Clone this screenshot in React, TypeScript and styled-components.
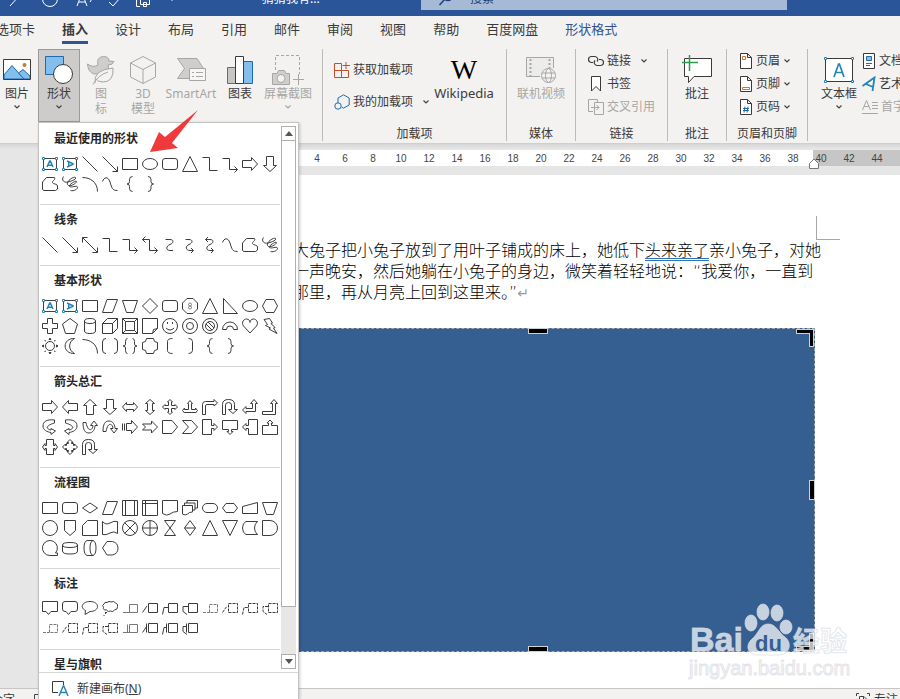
import React from 'react';
import styled, { createGlobalStyle, css } from 'styled-components';

const GlobalStyle = createGlobalStyle`
  * { box-sizing: border-box; }
  body { margin: 0; }
  button, input {
    font: inherit;
    color: inherit;
    background: none;
    border: 0;
    padding: 0;
    margin: 0;
  }
`;

const ui = '"Noto Sans", "Noto Sans CJK SC", sans-serif';
const ink = '#3b3a39';
const faded = '#a8a6a4';

const Window = styled.div`
  display: flex;
  flex-direction: column;
  height: 100vh;
  overflow: hidden;
  background: #e6e6e6;
  color: ${ink};
  font: 12px/15px ${ui};
`;

/* ---------- title bar ---------- */

const TitleBar = styled.header`
  display: flex;
  align-items: flex-end;
  flex: none;
  height: 16px;
  overflow: hidden;
  background: #2a5699;
  color: #fff;
`;

const TitleRow = styled.div`
  display: flex;
  align-items: center;
  flex: 1;
  height: 36px;
`;

const QuickTools = styled.div`
  display: flex;
  gap: 9px;
  padding-left: 5px;
  width: 262px;
`;

const QuickButton = styled.button<{ $wide?: boolean }>`
  display: grid;
  place-items: center;
  width: ${(p) => (p.$wide ? 32 : 20)}px;
  height: 24px;
  svg { stroke: #fff; }
`;

const DocTitle = styled.div`
  width: 159px;
`;

const SearchBox = styled.label`
  display: flex;
  align-items: center;
  flex: 0 1 366px;
  height: 24px;
  gap: 16px;
  padding-left: 17px;
  background: #a6bad5;
  color: #1f3f77;
  svg { stroke: #1f3f77; }
  input { flex: 1; min-width: 0; }
  input::placeholder { color: #1f3f77; opacity: 1; }
`;

/* ---------- tabs ---------- */

const Tabs = styled.nav`
  display: flex;
  flex: none;
  gap: 27px;
  height: 29px;
  margin-left: -4px;
  background: #f3f2f1;
  box-shadow: -4px 0 #f3f2f1;
  font-size: 13px;
`;

const Tab = styled.button<{ $active?: boolean; $context?: boolean }>`
  height: 28px;
  padding-top: 2px;
  white-space: nowrap;
  border-bottom: 3px solid ${(p) => (p.$active ? '#2f5591' : 'transparent')};
  font-weight: ${(p) => (p.$active ? 700 : 400)};
  color: ${(p) => (p.$context ? '#2f5591' : ink)};
`;

/* ---------- ribbon ---------- */

const Ribbon = styled.section`
  display: flex;
  flex: none;
  height: 99px;
  padding-top: 4px;
  background: #f3f2f1;
  border-bottom: 1px solid #d0cfce;
`;

const Group = styled.div<{ $pad?: number; $last?: boolean }>`
  position: relative;
  display: flex;
  flex: none;
  flex-direction: column;
  justify-content: space-between;
  height: 92px;
  padding: 0 ${(p) => p.$pad ?? 8}px;
  border-right: ${(p) => (p.$last ? 0 : 1)}px solid #bdbbb9;
`;

const GroupBody = styled.div`
  display: flex;
`;

const GroupLabel = styled.div`
  text-align: center;
  white-space: nowrap;
`;

const BigButton = styled.button<{ $width: number; $disabled?: boolean; $pressed?: boolean }>`
  display: flex;
  flex-direction: column;
  align-items: center;
  width: ${(p) => p.$width}px;
  height: 73px;
  padding-top: 4px;
  white-space: nowrap;
  color: ${(p) => (p.$disabled ? faded : ink)};
  ${(p) =>
    p.$pressed &&
    css`
      background: #cdcccb;
      box-shadow: inset 0 0 0 1px #9b9a99;
    `}
`;

const IconBox = styled.span`
  display: grid;
  place-items: center;
  height: 33px;
`;

const WikiMark = styled.span`
  font: 28px/32px "Liberation Serif", serif;
  color: #000;
`;

const WikiLabel = styled.span`
  font-size: 13px;
`;

const SmallColumn = styled.div<{ $loose?: boolean }>`
  display: flex;
  flex-direction: column;
  gap: ${(p) => (p.$loose ? 9 : 0)}px;
  padding: ${(p) => (p.$loose ? '9px 0 0 3px' : 0)};
`;

const SmallButton = styled.button<{ $disabled?: boolean }>`
  display: flex;
  align-items: center;
  gap: 3px;
  height: 23px;
  white-space: nowrap;
  color: ${(p) => (p.$disabled ? faded : ink)};
`;

const ChevronSlot = styled.span<{ $gap?: number }>`
  display: grid;
  place-items: center;
  width: 8px;
  height: 12px;
  margin-left: ${(p) => p.$gap ?? 0}px;
`;

const MenuAnchor = styled.div`
  position: relative;
`;

const GalleryRow = styled.div`
  display: flex;
  margin: 0 8px 0 -4px;
`;

/* ---------- shape menu ---------- */

const ShapeMenu = styled.div`
  position: absolute;
  z-index: 5;
  top: 73px;
  left: 0;
  display: flex;
  flex-direction: column;
  width: 261px;
  height: calc(100vh - 122px);
  padding-top: 1px;
  background: #fff;
  border: 1px solid #c3c2c1;
  border-bottom: 0;
  box-shadow: 1px 1px 3px rgba(0, 0, 0, 0.2);
`;

const MenuScroll = styled.div`
  display: flex;
  flex: 1;
  gap: 1px;
  min-height: 0;
`;

const Sections = styled.div`
  width: 241px;
  overflow: hidden;
  padding-left: 1px;
`;

const Section = styled.section`
  padding-bottom: 10px;
  border-bottom: 1px solid #d8d7d6;
`;

const SectionTitle = styled.h3`
  margin: 0;
  padding-left: 14px;
  font: bold 12px/30px ${ui};
  color: #262626;
`;

const ShapeGrid = styled.div`
  display: grid;
  grid-template-columns: repeat(12, 20px);
  grid-auto-rows: 20px;
`;

const ShapeButton = styled.button`
  display: block;
  svg { display: block; }
`;

const Scrollbar = styled.div`
  display: flex;
  flex-direction: column;
  width: 15px;
  margin: 2px 0 3px;
  background: #e8e7e6;
`;

const ScrollButton = styled.button`
  display: grid;
  place-items: center;
  flex: none;
  height: 15px;
  background: #fff;
  border: 1px solid #b0afae;
`;

const ScrollThumb = styled.div`
  flex: 10;
  background: #fff;
  border: 1px solid #b0afae;
  margin-top: -1px;
`;

const ScrollRest = styled.div`
  flex: 1;
`;

const NewCanvas = styled.button`
  display: flex;
  align-items: flex-start;
  flex: none;
  gap: 8px;
  height: 27px;
  padding: 8px 0 0 12px;
  border-top: 1px solid #d8d7d6;
  svg { display: block; }
`;

/* ---------- document ---------- */

const RulerStrip = styled.div`
  display: flex;
  flex: none;
  height: 31px;
  padding: 6px 0 9px 130px;
  background: linear-gradient(#d6d6d6, #e6e6e6 5px);
  font: 10px/17px "Liberation Sans", sans-serif;
  color: #444;
`;

const RulerActive = styled.div`
  position: relative;
  display: flex;
  justify-content: flex-end;
  width: 683px;
  padding-right: 6px;
  background: #fff;
`;

const RulerRest = styled.div`
  flex: 1;
  display: flex;
  overflow: hidden;
  background: #c6c6c6;
`;

const Tick = styled.span<{ $first?: boolean }>`
  flex: none;
  width: ${(p) => (p.$first ? 16 : 28)}px;
  margin-right: ${(p) => (p.$first ? 6 : 0)}px;
  text-align: center;
`;

const IndentMarker = styled.svg`
  position: absolute;
  right: -7px;
  bottom: -3px;
`;

const Page = styled.main`
  display: flex;
  flex: 1;
  flex-direction: column;
  min-height: 0;
  margin-left: 110px;
  padding: 41px 0 36px 151px;
  background: #fff;
`;

const MarginCorner = styled.div`
  flex: none;
  width: 24px;
  height: 24px;
  margin-left: 555px;
  border: solid #a6a6a6;
  border-width: 0 0 1px 1px;
`;

const Paragraph = styled.p`
  margin: 0 0 25px 32px;
  font: 300 16px/21px "DejaVu Sans", "Noto Sans CJK SC", sans-serif;
  color: #000;
  white-space: nowrap;
`;

const Grammar = styled.span`
  text-decoration: underline double #2e74b5 1px;
  text-underline-offset: 2px;
`;

const ReturnMark = styled.span`
  color: #999;
  font: 14px/20px "DejaVu Sans", sans-serif;
`;

const Drawing = styled.div`
  position: relative;
  flex: 1;
  width: 554px;
  background: #355f91;
  outline: 1px dashed #a4a7ac;
  outline-offset: -1px;
`;

const Handle = styled.span<{ $at: 'top' | 'right' | 'bottom' }>`
  position: absolute;
  background: #000;
  border: 1px solid #d0d0d0;
  ${(p) =>
    p.$at === 'right'
      ? css`right: 0; top: calc(50% - 10px); width: 6px; height: 20px;`
      : css`left: calc(50% - 10px); width: 20px; height: 6px; ${p.$at}: 0;`}
`;

const CropCorner = styled.svg<{ $bottom?: boolean }>`
  position: absolute;
  right: 0;
  ${(p) => (p.$bottom ? 'bottom: 0; transform: scaleY(-1);' : 'top: 0;')}
`;

const Watermark = styled.svg`
  position: absolute;
  right: -38px;
  bottom: -30px;
`;

const StatusBar = styled.footer`
  display: flex;
  flex: none;
  align-items: center;
  justify-content: space-between;
  height: 22px;
  margin: 0 0 -11px -9px;
  padding: 0 2px 0 0;
  background: #f3f2f1;
  border-top: 1px solid #c8c6c4;
`;

const StatusItem = styled.button<{ $gap?: number }>`
  display: flex;
  align-items: center;
  gap: ${(p) => p.$gap ?? 4}px;
`;

const Pointer = styled.svg`
  position: absolute;
  z-index: 6;
  left: 110px;
  top: 60px;
  pointer-events: none;
`;

/* ---------- icons ---------- */

const Chevron = ({ color = '#444' }: { color?: string }) => (
  <svg width="8" height="6" viewBox="0 0 8 6" fill="none" stroke={color} strokeWidth="1.2">
    <path d="M1.5 1.5L4 4L6.5 1.5" />
  </svg>
);

const box = 'M8.5 4.5H17.5V13.5H8.5Z';
const rect = 'M2.5 4.5H17.5V15.5H2.5Z';
const round = 'M5 4.5H15Q17.5 4.5 17.5 7V13Q17.5 15.5 15 15.5H5Q2.5 15.5 2.5 13V7Q2.5 4.5 5 4.5Z';
const circle = 'M17.5 10A7.5 7.5 0 1 1 2.5 10A7.5 7.5 0 1 1 17.5 10Z';

const paths: Record<string, string> = {
  line: 'M2.5 2.5L17.5 17.5',
  lineArrow: 'M2.5 2.5L17.5 17.5M17.5 12.5V17.5H12.5',
  lineDouble: 'M2.5 2.5L17.5 17.5M17.5 12.5V17.5H12.5M2.5 7.5V2.5H7.5',
  rect,
  round,
  ellipse: 'M17.5 10A7.5 5.5 0 1 1 2.5 10A7.5 5.5 0 1 1 17.5 10Z',
  triangle: 'M10 2.5L17.5 17.5H2.5Z',
  elbow: 'M2.5 3.5H9.5V16.5H17.5',
  elbowArrow: 'M2.5 4.5H9.5V15.5H17.5M14.5 12.5L17.5 15.5L14.5 18.5',
  elbowDouble: 'M2.5 4.5H9.5V15.5H17.5M14.5 12.5L17.5 15.5L14.5 18.5M5.5 1.5L2.5 4.5L5.5 7.5',
  right: 'M2.5 6.5H11.5V3.5L17.5 10L11.5 16.5V13.5H2.5Z',
  left: 'M17.5 6.5H8.5V3.5L2.5 10L8.5 16.5V13.5H17.5Z',
  up: 'M6.5 17.5V8.5H3.5L10 2.5L16.5 8.5H13.5V17.5Z',
  down: 'M6.5 2.5V11.5H3.5L10 17.5L16.5 11.5H13.5V2.5Z',
  freeform: 'M6.5 3.5H14.5C16 6 12 6.5 12.5 8.5S17.5 9.5 17.5 12V15L15.5 16.5H3.5L2.5 15V8Z',
  scribble: 'M3.5 2.500C1 6 4 9 8 8S17 5 15.500 3.500S6 7 7.500 10.500S17 9 16.500 7.500S8 11 9.500 12.500S17 11 17.500 13S14 17.500 10.500 16.500',
  arc: 'M2.5 3.5C10 3.5 17.5 8 17.5 17.5',
  curve: 'M2.5 7.5C4 3 8 2 10 8S12 16.5 17.5 16.5',
  lbrace: 'M12.5 2.5Q9.5 2.5 9.5 5.5V7.5Q9.5 10 7 10Q9.5 10 9.5 12.5V14.5Q9.5 17.5 12.5 17.5',
  rbrace: 'M8 2.5Q11 2.5 11 5.5V7.5Q11 10 13.5 10Q11 10 11 12.5V14.5Q11 17.5 8 17.5',
  lbracket: 'M12.5 2.5Q7.500 2.5 7.500 5.5V14.5Q7.500 17.5 12.5 17.5',
  rbracket: 'M8.5 2.5Q12.5 2.5 12.5 5.5V14.5Q12.5 17.5 8.5 17.5',
  curveA: 'M5.5 4.5H10C14 4.5 14 8 10 9.5S5.5 15.5 10 15.5H13',
  curveArrow: 'M5.5 4.5H9C13 4.5 13 8 9 9.5S5.5 15.5 10 15.5H13M11 13L13.5 15.5L11 18',
  curveDouble: 'M5.5 4.5H10C14 4.5 14 8 10 9.5S5.5 15.5 10 15.5H13M11 13L13.5 15.5L11 18M8 2L5.5 4.5L8 7',
  para: 'M7 3.5H17.5L12.5 16.5H2.5Z',
  trap: 'M2.5 4.5H17.5L13.5 16.5H6.5Z',
  diamond: 'M10 2.5L17.5 10L10 17.5L2.5 10Z',
  octagon: 'M7 2.5H13L17.5 7V13L13 17.5H7L2.5 13V7Z',
  rtriangle: 'M3.5 2.5V17.5H17.5Z',
  hexagon: 'M6 3.5H14L17.5 10L14 16.5H6L2.5 10Z',
  plus: 'M7.5 2.5H12.5V7.5H17.5V12.5H12.5V17.5H7.5V12.5H2.5V7.5H7.5Z',
  pentagon: 'M10 2.5L17.5 8L14.5 17.5H5.5L2.5 8Z',
  can: 'M4.5 5V15Q4.5 17.5 10 17.5T15.5 15V5Q15.5 2.5 10 2.5T4.5 5Q4.5 7.5 10 7.5T15.5 5',
  cube: 'M2.5 7.5H12.5V17.5H2.5ZM2.5 7.5L7.5 2.5H17.5V12.5L12.5 17.5M12.5 7.5L17.5 2.5',
  bevel: 'M2.5 2.5H17.5V17.5H2.5ZM5.5 5.5H14.5V14.5H5.5ZM2.5 2.5L5.5 5.5M17.5 2.5L14.5 5.5M2.5 17.5L5.5 14.5M17.5 17.5L14.5 14.5',
  folded: 'M2.5 2.5H17.5V12.5L12.5 17.5H2.5ZM12.5 17.5L13.5 13.5L17.5 12.5',
  smile: circle + 'M6 12Q10 16 14 12M7 7.5H8M7 6.5H8M12 7.5H13M12 6.5H13',
  donut: circle + 'M13.5 10A3.5 3.5 0 1 1 6.5 10A3.5 3.5 0 1 1 13.5 10Z',
  nosign: circle + 'M14.5 10A4.5 4.5 0 1 1 5.5 10A4.5 4.5 0 1 1 14.5 10ZM6 8L12 14M8 6L14 12',
  blockArc: 'M2.5 13.5A7.5 7.5 0 0 1 17.5 13.5H13.5A3.5 3.5 0 0 0 6.5 13.5Z',
  heart: 'M10 17L3.5 10C1 6 4 3 6.5 3S10 5 10 6.5C10 5 11 3 13.5 3S19 6 16.5 10Z',
  bolt: 'M4 3.5L9.5 2.5L12.5 7L11 7.5L15 11.5L13.5 12L17 17.5L9 13L10.5 12L5.5 9.5L7.5 8.5Z',
  sun: 'M14.5 10A4.5 4.5 0 1 1 5.5 10A4.5 4.5 0 1 1 14.5 10ZM9 3.5L10 2L11 3.5ZM9 16.5L10 18L11 16.5ZM3.5 9L2 10L3.5 11ZM16.5 9L18 10L16.5 11ZM4.5 4.5L6 5M15.5 4.5L14 5M4.5 15.5L6 15M15.5 15.5L14 15',
  moon: 'M14.5 2.5C2 2 2 18 14.5 17.5C8 14 8 6 14.5 2.5Z',
  bracketPair: 'M6 2.5Q2.5 2.5 2.5 6V14Q2.5 17.5 6 17.5M14 2.5Q17.5 2.5 17.5 6V14Q17.5 17.5 14 17.5',
  bracePair: 'M7.5 2.5Q5.500 2.5 5.500 5.5V8Q5.500 10 3 10Q5.500 10 5.500 12V14.5Q5.500 17.5 7.5 17.5M12.5 2.5Q14.500 2.5 14.500 5.5V8Q14.500 10 17 10Q14.500 10 14.500 12V14.5Q14.500 17.5 12.5 17.5',
  plaque: 'M6.5 2.5H13.5Q13.5 6.5 17.5 6.5V13.5Q13.5 13.5 13.5 17.5H6.5Q6.5 13.5 2.5 13.5V6.5Q6.5 6.5 6.5 2.5Z',
  leftRight: 'M6.5 5.5L2.5 10L6.5 14.5V12.5H13.5V14.5L17.5 10L13.5 5.5V7.5H6.5Z',
  upDown: 'M5.5 6.5L10 2.5L14.5 6.5H12.5V13.5H14.5L10 17.5L5.5 13.5H7.5V6.5Z',
  quad: 'M10 2.5L12.500 5H11.5V8.5H15V7.500L17.5 10L15 12.500V11.5H11.5V15H12.500L10 17.5L7.500 15H8.5V11.5H5V12.500L2.5 10L5 7.500V8.5H8.5V5H7.500Z',
  triArrow: 'M10 3.500L12.5 6.5H11.5V12.5H15.500V11L17.5 13.500L15.500 16V15.5H4.500V16L2.5 13.500L4.500 11V12.5H8.5V6.5H7.5Z',
  bentRight: 'M2.5 17.5V7.5Q2.5 4.5 5.5 4.5H14V2.5L17.5 6L14 9V7.5H7Q5.5 7.5 5.5 9V17.5Z',
  uTurn: 'M2.5 17.5V7.5Q2.5 2.5 8.5 2.5T14.5 7.5V12.5H17.5L13 16.5L8.5 12.5H11.5V8Q11.5 5.5 8.5 5.5T5.5 8V17.5Z',
  leftUp: 'M14 2.5L17.5 6.500H15.5V14.5H6V16.5L2.5 13L6 9.500V11.500H12.5V6.500H10.500Z',
  bentUp: 'M14 2.5L17.5 6.5H15.5V17.5H2.5V14.5H12.5V6.5H10.5Z',
  curveRight: 'M14.5 3C6 2 3 5 3 9S7 15 11 15.5V17.5L15.5 14L11 11.5V13C7 12.5 4 9 14.5 6Z',
  curveLeft: 'M5.5 3C14 2 17 5 17 9S13 15 9 15.5V17.5L4.5 14L9 11.5V13C13 12.5 16 9 5.5 6Z',
  curveUp: 'M3 5.5C3 13 5 16 9 16S15 12 15 8.5H17.5L14 4L10.5 8.5H13C13 13 8 16 6 5.5Z',
  curveDown: 'M3 14.5C3 7 5 4 9 4S15 8 15 11.5H17.5L14 16L10.5 11.5H13C13 7 8 4 6 14.5Z',
  striped: 'M2.5 6.5V13.5M4.5 6.5V13.5M6.5 6.5H11.5V3.5L17.5 10L11.5 16.5V13.5H6.5Z',
  notched: 'M2.5 7H11.5V4L17.5 10L11.5 16V13H2.5L5.5 10Z',
  homePlate: 'M2.5 3.5H12L17.5 10L12 16.5H2.5Z',
  chevron: 'M2.5 3.5H11.5L17.5 10L11.5 16.5H2.5L8.5 10Z',
  callRight: 'M2.5 2.5H11.5V8.500H14V6.5L17.5 10L14 13.5V11.500H11.5V17.5H2.5Z',
  callDown: 'M2.5 3.5H17.5V12.5H11.500V14.5H13L10 17.5L7 14.5H8.500V12.5H2.5Z',
  callLeft: 'M17.5 2.5H8.5V8.500H6V6.5L2.5 10L6 13.5V11.500H8.5V17.5H17.5Z',
  callUp: 'M2.5 17.5H17.5V8.5H11.500V6H13L10 3L7 6H8.500V8.5H2.5Z',
  callLR: 'M6.5 2.5H13.5V8.5H15V6.5L17.5 10L15 13.5V11.5H13.5V17.5H6.5V11.5H5V13.5L2.5 10L5 6.5V8.5H6.5Z',
  callQuad: 'M10 2.5L13 5.500H11.500V6.5H13.5V8.500H14.500V7L17.5 10L14.500 13V11.500H13.5V13.5H11.500V14.500H13L10 17.5L7 14.500H8.500V13.5H6.5V11.500H5.500V13L2.5 10L5.500 7V8.500H6.5V6.5H8.500V5.500H7Z',
  flowDiamond: 'M10 5L17.5 10L10 15L2.5 10Z',
  predefined: 'M2.5 2.5H17.5V17.5H2.5ZM5.5 2.5V17.5M14.5 2.5V17.5',
  internal: 'M2.5 2.5H17.5V17.5H2.5ZM5.5 2.5V17.5M2.5 5.5H17.5',
  doc: 'M2.5 2.5H17.5V13.5Q13 13.5 10 16T2.5 15.5Z',
  multiDoc: 'M2.5 7.5H12.5V14Q9 14 7.5 16T2.5 16ZM4.5 7.5V5H15V12H12.5M7 5V2.5H17.5V10H15',
  terminator: 'M7 5.5H13A4.5 4.5 0 0 1 13 14.5H7A4.5 4.5 0 0 1 7 5.5Z',
  prep: 'M6 5.5H14L17.5 10L14 14.5H6L2.5 10Z',
  manualInput: 'M2.5 8.5L17.5 4.5V15.5H2.5Z',
  circle,
  offpage: 'M4.5 2.5H15.5V12.5L10 17.5L4.5 12.5Z',
  card: 'M7.5 2.5H17.5V17.5H2.5V7.5Z',
  tape: 'M2.5 3.500Q6 7.5 10 5T17.5 3.500V15.5Q14 12.5 10 15T2.5 16.500Z',
  summing: circle + 'M4.5 4.5L15.5 15.5M15.5 4.5L4.5 15.5',
  orGate: circle + 'M10 2.5V17.5M2.5 10H17.5',
  collate: 'M4.5 2.5H15.5L4.5 17.5H15.5Z',
  sort: 'M10 2.5L15.5 10L10 17.5L4.5 10ZM4.5 10H15.5',
  merge: 'M2.5 2.5H17.5L10 17.5Z',
  stored: 'M6 3.5H17.5Q14.5 6 14.5 10T17.5 16.5H6Q2.5 15 2.5 10T6 3.5Z',
  delay: 'M2.5 2.5H10A7.5 7.5 0 0 1 10 17.5H2.5Z',
  seq: 'M10 17.5A7.5 7.5 0 1 1 15.5 15H17.5V17.5Z',
  disk: 'M2.5 7V13Q2.5 16 10 16T17.5 13V7Q17.5 4.5 10 4.5T2.5 7Q2.5 9.5 10 9.5T17.5 7',
  drum: 'M7 2.5H13Q16 3.5 16 10T13 17.5H7Q4 16.5 4 10T7 2.5M13 2.5Q10 3.5 10 10T13 17.5',
  display: 'M7 3.5H12.5A7.5 7 0 0 1 12.5 17H7L2.5 10Z',
  bubbleRect: 'M2.5 2.5H17.5V12.5H11L8.5 15.5L6 12.5H2.5Z',
  bubbleRound: 'M5 2.5H15Q17.5 2.5 17.5 5V10Q17.5 12.5 15 12.5H11L8.5 15.5L6 12.5H5Q2.5 12.5 2.5 10V5Q2.5 2.5 5 2.5Z',
  bubbleOval: 'M10 2.5C20 2.5 20 12.5 10 12.5L5 15.5L5.5 11.5C-1 8 3 2.5 10 2.5Z',
  cloud: 'M7 3.5Q9 1.5 11 3Q14 1.5 15.5 4Q18.5 5 17.5 7.5Q18 10.5 14.5 11Q13 13.5 10.5 12Q8 13.5 6.5 11Q2.5 11 3.5 8.5Q1.5 6 4 5Q4.5 2.5 7 3.5ZM5 13.5H7M5 14.500H6M3.5 16.5H4.5',
  c1: 'M3 13.5H9.5M9.5 5.5H17.5V13.5H9.5Z',
  c2: 'M2.5 13.5L7 7' + box,
  c3: 'M2.5 15.5L4 8.5H8' + box,
  c4: 'M8 7.5H3V12.5L7 15.5' + box,
  a1: 'M3 13.5H9.5M7.5 5.5V13.5M9.5 5.5H17.5V13.5H9.5Z',
  a2: 'M2.5 13.5L7 7M6.5 4.5V13.5' + box,
  a3: 'M2.5 15.5L4 8.5H6.5M6.5 4.5V13.5' + box,
  a4: 'M6.5 7.5H3V12.5L7 15.5M6.5 4.5V13.5' + box,
};

const TextBoxGlyph = ({ vertical }: { vertical?: boolean }) => (
  <svg width="20" height="20" viewBox="0 0 20 20" fill="none">
    <path d="M4 4.5H16M4 15.5H16M3.5 5V15M16.5 5V15" stroke="#444" />
    <path d="M2.5 3.5h2v2h-2zM15.5 3.5h2v2h-2zM2.5 14.5h2v2h-2zM15.5 14.5h2v2h-2z" fill="#fff" stroke="#2683b5" />
    <path
      d="M7 13L9.7 7H10.3L13 13M8 11.3H12"
      stroke="#2683b5"
      strokeWidth="1.5"
      transform={vertical ? 'rotate(90 10 10)' : undefined}
    />
  </svg>
);

const ShapeGlyph = ({ name }: { name: string }) => {
  if (name === 'text' || name === 'textV') return <TextBoxGlyph vertical={name === 'textV'} />;
  const dashed = name.startsWith('d-');
  const key = dashed ? name.slice(2) : name;
  const light = key === 'c1' || key === 'a1';
  return (
    <svg width="20" height="20" viewBox="0 0 20 20" fill="none" stroke={light ? '#777' : '#3c3c3c'} strokeDasharray={dashed ? '3 1' : undefined}>
      <path d={paths[key]} />
      {key === 'octagon' && <path d="M10 7A1.5 1.5 0 1 1 10 10A1.5 1.5 0 1 1 10 7M10 10A1.5 1.5 0 1 1 10 13A1.5 1.5 0 1 1 10 10" stroke="#666" strokeWidth="0.8" />}
    </svg>
  );
};

const sections: { title: string; shapes: string }[] = [
  { title: '最近使用的形状', shapes: 'text textV line lineArrow rect ellipse round triangle elbow elbowArrow right down freeform scribble arc curve lbrace rbrace' },
  { title: '线条', shapes: 'line lineArrow lineDouble elbow elbowArrow elbowDouble curveA curveArrow curveDouble curve freeform scribble' },
  { title: '基本形状', shapes: 'text textV rect para trap diamond round octagon triangle rtriangle ellipse hexagon plus pentagon can cube bevel folded smile donut nosign blockArc heart bolt sun moon arc bracketPair bracePair plaque lbracket rbracket lbrace rbrace' },
  { title: '箭头总汇', shapes: 'right left up down leftRight upDown quad triArrow bentRight uTurn leftUp bentUp curveRight curveLeft curveUp curveDown striped notched homePlate chevron callRight callDown callLeft callUp callLR callQuad uTurn' },
  { title: '流程图', shapes: 'rect round flowDiamond para predefined internal doc multiDoc terminator prep manualInput trap circle offpage card tape summing orGate collate sort triangle merge stored delay seq disk drum display' },
  { title: '标注', shapes: 'bubbleRect bubbleRound bubbleOval cloud c1 c2 c3 c4 d-c1 d-c2 d-c3 d-c4 d-c1 d-c2 d-c3 d-c4 a1 a2 a3 a4' },
  { title: '星与旗帜', shapes: '' },
];

const PictureIcon = () => (
  <svg width="30" height="24" viewBox="0 0 30 24">
    <path d="M1.5 1.5H28.5V21.5H1.5Z" fill="#fff" />
    <path d="M2 17L10 7.5L22 21H2Z" fill="#83beec" stroke="#1e6bb0" />
    <path d="M16.5 15L21 11.5L28 18V21H22Z" fill="#83beec" stroke="#1e6bb0" />
    <circle cx="22.500" cy="7" r="2" fill="#c8793a" />
    <path d="M1.5 1.5H28.5V21.5H1.5Z" fill="none" stroke="#3b3a39" />
  </svg>
);

const ShapesIcon = () => (
  <svg width="30" height="30" viewBox="0 0 30 30">
    <path d="M1.5 1.500H19.5V19.5H1.5Z" fill="#83beec" stroke="#1e6bb0" />
    <circle cx="19" cy="19" r="9.5" fill="#fff" stroke="#3b3a39" />
  </svg>
);

const DuckIcon = () => (
  <svg width="30" height="30" viewBox="0 0 30 30" fill="#cfcecd" stroke="#a8a6a4">
    <path d="M1.500 9Q7 13 12 10Q10 2 17.5 1.500Q23 1.500 23 6L28 6.500Q27 10 22 10Q24 14 20 18L8 19Q2 17 1.500 9Z" />
    <path d="M9 28Q7 15 27 13Q28 27 17 27Q12 27 10 24M7 29.500Q12 20 22 17" fill="#f3f2f1" />
  </svg>
);

const CubeIcon = () => (
  <svg width="28" height="30" viewBox="0 0 28 30" fill="none" stroke="#a8a6a4">
    <path d="M14 1.500L26.500 8V22L14 28.500L1.500 22V8ZM1.500 8L14 14.500L26.500 8M14 14.500V28.500" />
  </svg>
);

const SmartArtIcon = () => (
  <svg width="32" height="26" viewBox="0 0 32 26" stroke="#a8a6a4">
    <path d="M2.500 1.500H22L28.500 11.500L22 21.500H2.500L9.500 11.500Z" fill="#cfcecd" />
    <path d="M14.500 11.500H30.500V23.500H14.500Z" fill="#f7f6f5" />
    <path d="M17 15.500H19M21 15.500H28M17 19.500H19M21 19.500H28" />
  </svg>
);

const ChartIcon = () => (
  <svg width="28" height="30" viewBox="0 0 28 30">
    <path d="M1.500 12.500H9.500V28.500H1.500Z" fill="#c8c6c4" stroke="#6b6a69" />
    <path d="M17.500 6.500H26.500V28.500H17.500Z" fill="#83beec" stroke="#1e6bb0" />
    <path d="M9.500 1.500H17.500V28.500H9.500Z" fill="#fff" stroke="#3b3a39" />
  </svg>
);

const ScreenshotIcon = () => (
  <svg width="34" height="32" viewBox="0 0 34 32" fill="none" stroke="#a8a6a4">
    <path d="M4.500 16V1.500H28.500V20" strokeDasharray="3 2" />
    <path d="M1.500 19.500H6L7.500 16.500H13.500L15 19.500H18.500V30.500H1.500Z" fill="#cfcecd" />
    <circle cx="10" cy="24.500" r="4" fill="#f3f2f1" />
    <path d="M22 25.500H33M27.500 20V31" />
  </svg>
);

const AddInsIcon = () => (
  <svg width="16" height="16" viewBox="0 0 16 16" fill="none" stroke="#c1512a">
    <path d="M7.500 1.500H0.500V15.500H14.500V8.500H0.500M7.500 1.500V15.500M12 0V7M8.500 3.500H16" />
  </svg>
);

const MyAddInsIcon = () => (
  <svg width="16" height="16" viewBox="0 0 16 16" fill="none" stroke="#1e6bb0">
    <path d="M4 9V4L9.500 0.800L15.200 4V11L9.500 14.200L7.500 13" />
    <circle cx="4" cy="12" r="3.200" />
  </svg>
);

const VideoIcon = () => (
  <svg width="32" height="28" viewBox="0 0 32 28" fill="none" stroke="#a8a6a4">
    <path d="M15 20.500H1.500V1.500H28.500V12" fill="#ececeb" />
    <path d="M5.500 3V20M24.500 3V12" strokeDasharray="2 2" strokeWidth="2" />
    <circle cx="23.500" cy="19.500" r="7" fill="#f3f2f1" />
    <ellipse cx="23.500" cy="19.500" rx="3" ry="7" />
    <path d="M17 17H30M17 22H30" />
  </svg>
);

const LinkIcon = () => (
  <svg width="16" height="16" viewBox="0 0 16 16" fill="none" stroke="#3b3a39" strokeWidth="1.200">
    <path d="M5 9.500H3.500A3 3 0 1 1 3.500 3.500H7A3 3 0 0 1 9 8.500M11 6.500H12.500A3 3 0 1 1 12.500 12.500H9A3 3 0 0 1 7 7.500" />
  </svg>
);

const BookmarkIcon = () => (
  <svg width="16" height="16" viewBox="0 0 16 16" fill="#fff" stroke="#3b3a39">
    <path d="M3.500 0.500H12.500V15L8 10.500L3.500 15Z" />
  </svg>
);

const CrossRefIcon = () => (
  <svg width="16" height="16" viewBox="0 0 16 16" fill="none" stroke="#a8a6a4">
    <path d="M5 12.500H0.500V0.500H9.500V3.500M6.500 3.500H15.500V15.500H6.500ZM3 8.500H11M8.500 6L11 8.500L8.500 11" />
  </svg>
);

const CommentIcon = () => (
  <svg width="32" height="30" viewBox="0 0 32 30" fill="#fff" stroke="#3b3a39">
    <path d="M3.500 3.500H30.500V21.500H13L7.500 27.500V21.500H3.500Z" />
    <path d="M8.500 0V16M1 7.500H17" stroke="#2f9a4b" strokeWidth="1.500" />
  </svg>
);

const PageIcon = ({ kind }: { kind: 'header' | 'footer' | 'number' }) => (
  <svg width="16" height="16" viewBox="-2 0 16 16" fill="#fff" stroke="#3b3a39">
    <path d="M1.500 0.500H8.500L12.500 4.500V15.500H1.500ZM8.500 0.500V4.500H12.500" />
    {kind === 'header' && <path d="M3.500 3.500H6.500V6.500H3.500Z" stroke="#d9722b" />}
    {kind === 'footer' && <path d="M3.500 11.500H10.500V13.500H3.500Z" stroke="#d9722b" />}
    {kind === 'number' && <path d="M6 7.500L5 13.500M9 7.500L8 13.500M4 9.500H10M4 11.500H10" stroke="#1e6bb0" />}
  </svg>
);

const TextFrameIcon = () => (
  <svg width="32" height="28" viewBox="0 0 32 28" fill="#fff">
    <path d="M2.500 2.500H29.500V25.500H2.500Z" stroke="#3b3a39" />
    <path d="M1.500 1.500h2v2h-2zM28.500 1.500h2v2h-2zM1.500 24.500h2v2h-2zM28.500 24.500h2v2h-2z" stroke="#2683b5" />
    <path d="M11 21L15.600 8H16.400L21 21M12.700 16.500H19.300" fill="none" stroke="#2683b5" strokeWidth="1.700" />
  </svg>
);

const PartsIcon = () => (
  <svg width="14" height="16" viewBox="0 0 14 16" fill="#fff">
    <path d="M1.500 0.500H12.500V15.500H1.500Z" stroke="#3b3a39" />
    <path d="M4.500 3.500H9.500V7.500H4.500Z" fill="#83beec" stroke="#1e6bb0" />
    <path d="M4 10.500H10M4 12.500H8" stroke="#1e6bb0" />
  </svg>
);

const WordArtIcon = () => (
  <svg width="14" height="16" viewBox="0 0 14 16" fill="none" stroke="#2683b5" strokeWidth="1.800">
    <path d="M0.500 10L12.500 1.500L10.500 15M4 8L11 11" />
  </svg>
);

const DropCapIcon = () => (
  <svg width="16" height="16" viewBox="0 0 16 16" fill="none" stroke="#a8a6a4">
    <path d="M0.500 11L4.500 1.500L8.500 11M2 7.500H7M10 3.500H16M10 6.500H16M10 9.500H16M0 14.500H16" />
  </svg>
);

const tabs = ['选项卡', '插入', '设计', '布局', '引用', '邮件', '审阅', '视图', '帮助', '百度网盘', '形状格式'];
const ticks = Array.from({ length: 18 }, (_, i) => 4 + i * 2);

const QuickAccess = () => (
  <QuickTools>
    <QuickButton aria-label="画笔">
      <svg width="16" height="20" fill="none"><path d="M3 18L13 7" /></svg>
    </QuickButton>
    <QuickButton aria-label="重复" $wide>
      <svg width="18" height="20" fill="none"><circle cx="9" cy="11" r="7.500" /></svg>
    </QuickButton>
    <QuickButton aria-label="朗读">
      <svg width="18" height="20" fill="none"><path d="M1 18L6 5L11 18M3 14H9M12 6Q14 9 12 12M15 4Q18 9 14 14" /></svg>
    </QuickButton>
    <QuickButton aria-label="检查">
      <svg width="16" height="20" fill="none"><path d="M3 14L7 18L14 10" /></svg>
    </QuickButton>
    <QuickButton aria-label="打印预览">
      <svg width="16" height="20" fill="none"><path d="M5 18.500H1.500V4H10M5.500 11.500H14.500V16.500H5.500ZM7.500 11V8.500H12.500V11M8.500 14.500H11.500V18.500H8.500Z" /></svg>
    </QuickButton>
    <QuickButton aria-label="自定义">
      <svg width="8" height="8" fill="none"><path d="M1 3.500L4 6.500L7 3.500" /></svg>
    </QuickButton>
  </QuickTools>
);

const ShapesDropdown = () => (
  <ShapeMenu>
    <MenuScroll>
      <Sections>
        {sections.map((s) => (
          <Section key={s.title}>
            <SectionTitle>{s.title}</SectionTitle>
            <ShapeGrid>
              {s.shapes.split(' ').filter(Boolean).map((name, i) => (
                <ShapeButton key={i} aria-label={name}>
                  <ShapeGlyph name={name} />
                </ShapeButton>
              ))}
            </ShapeGrid>
          </Section>
        ))}
      </Sections>
      <Scrollbar>
        <ScrollButton aria-label="向上">
          <svg width="8" height="5"><path d="M0 5L4 0L8 5Z" fill="#555" /></svg>
        </ScrollButton>
        <ScrollThumb />
        <ScrollRest />
        <ScrollButton aria-label="向下">
          <svg width="8" height="5"><path d="M0 0L4 5L8 0Z" fill="#555" /></svg>
        </ScrollButton>
      </Scrollbar>
    </MenuScroll>
    <NewCanvas>
      <svg width="18" height="18" viewBox="0 0 18 18" fill="none">
        <path d="M7 11.500H1.500V0.500H12.500V4" stroke="#3b3a39" />
        <path d="M8 15L12.200 5H12.800L17 15M9.500 11.500H15.500" stroke="#2683b5" strokeWidth="1.400" />
      </svg>
      <span>新建画布(<u>N</u>)</span>
    </NewCanvas>
  </ShapeMenu>
);

const BaiduMark = () => (
  <Watermark width="168" height="80" viewBox="0 0 168 80">
    <g fill="#fff" fillOpacity="0.72" stroke="#d9dce2" strokeOpacity="0.7" strokeWidth="1">
      <text x="5" y="49" fontFamily="Liberation Sans" fontWeight="700" fontSize="34">Bai</text>
      <ellipse cx="66" cy="21" rx="6" ry="8" />
      <ellipse cx="78" cy="10" rx="6" ry="8" />
      <ellipse cx="92" cy="11" rx="6" ry="8" />
      <ellipse cx="101" cy="25" rx="6" ry="7" />
      <path d="M83 22C91 22 93 30 101 36C108 43 103 53 94 53C88 53 79 53 73 53C62 53 60 43 67 37C74 31 75 22 83 22Z" />
      <text x="108" y="49" fontFamily="Noto Sans CJK SC" fontWeight="700" fontSize="27">经验</text>
      <text x="4" y="73" fontFamily="Liberation Sans" fontSize="20" fill="#f4f4f4">jingyan.baidu.com</text>
    </g>
    <text x="70" y="49" fontFamily="Liberation Sans" fontWeight="700" fontSize="22" fill="#355f91">du</text>
  </Watermark>
);

const Corner = ({ bottom }: { bottom?: boolean }) => (
  <CropCorner $bottom={bottom} width="20" height="20" viewBox="0 0 20 20" fill="none">
    <path d="M1 3.500H16.500V19" stroke="#d0d0d0" strokeWidth="5" />
    <path d="M2 3.500H16.500V18" stroke="#000" strokeWidth="3" />
  </CropCorner>
);

export default function App() {
  return (
    <Window>
      <GlobalStyle />
      <TitleBar>
        <TitleRow>
          <QuickAccess />
          <DocTitle>猜猜我有...</DocTitle>
          <SearchBox>
            <svg width="16" height="16" fill="none" strokeWidth="1.500"><circle cx="10" cy="6" r="4.500" /><path d="M7 9L1.500 15" /></svg>
            <input placeholder="搜索" aria-label="搜索" />
          </SearchBox>
        </TitleRow>
      </TitleBar>

      <Tabs>
        {tabs.map((t) => (
          <Tab key={t} $active={t === '插入'} $context={t === '形状格式'}>{t}</Tab>
        ))}
      </Tabs>

      <Ribbon>
        <Group $pad={0}>
          <GalleryRow>
            <BigButton $width={42}><IconBox><PictureIcon /></IconBox>图片<ChevronSlot><Chevron /></ChevronSlot></BigButton>
            <MenuAnchor>
              <BigButton $width={42} $pressed><IconBox><ShapesIcon /></IconBox>形状<ChevronSlot><Chevron /></ChevronSlot></BigButton>
              <ShapesDropdown />
              <Pointer width="52" height="46" viewBox="0 0 52 46">
                <path d="M50 1L24 34L30 39L2 43L11 23L17 28Z" fill="#f0393a" />
              </Pointer>
            </MenuAnchor>
            <BigButton $width={42} $disabled><IconBox><DuckIcon /></IconBox><span>图<br />标</span></BigButton>
            <BigButton $width={42} $disabled><IconBox><CubeIcon /></IconBox><span>3D<br />模型</span></BigButton>
            <BigButton $width={54} $disabled><IconBox><SmartArtIcon /></IconBox>SmartArt</BigButton>
            <BigButton $width={44}><IconBox><ChartIcon /></IconBox>图表</BigButton>
            <BigButton $width={52} $disabled><IconBox><ScreenshotIcon /></IconBox>屏幕截图<ChevronSlot><Chevron color={faded} /></ChevronSlot></BigButton>
          </GalleryRow>
        </Group>

        <Group>
          <GroupBody>
            <SmallColumn $loose>
              <SmallButton><AddInsIcon />获取加载项</SmallButton>
              <SmallButton><MyAddInsIcon />我的加载项<ChevronSlot $gap={6}><Chevron /></ChevronSlot></SmallButton>
            </SmallColumn>
            <BigButton $width={68}><IconBox><WikiMark>W</WikiMark></IconBox><WikiLabel>Wikipedia</WikiLabel></BigButton>
          </GroupBody>
          <GroupLabel>加载项</GroupLabel>
        </Group>

        <Group>
          <BigButton $width={52} $disabled><IconBox><VideoIcon /></IconBox>联机视频</BigButton>
          <GroupLabel>媒体</GroupLabel>
        </Group>

        <Group $pad={12}>
          <SmallColumn>
            <SmallButton><LinkIcon />链接<ChevronSlot $gap={6}><Chevron /></ChevronSlot></SmallButton>
            <SmallButton><BookmarkIcon />书签</SmallButton>
            <SmallButton $disabled><CrossRefIcon />交叉引用</SmallButton>
          </SmallColumn>
          <GroupLabel>链接</GroupLabel>
        </Group>

        <Group>
          <BigButton $width={42}><IconBox><CommentIcon /></IconBox>批注</BigButton>
          <GroupLabel>批注</GroupLabel>
        </Group>

        <Group $pad={10}>
          <SmallColumn>
            <SmallButton><PageIcon kind="header" />页眉<ChevronSlot><Chevron /></ChevronSlot></SmallButton>
            <SmallButton><PageIcon kind="footer" />页脚<ChevronSlot><Chevron /></ChevronSlot></SmallButton>
            <SmallButton><PageIcon kind="number" />页码<ChevronSlot><Chevron /></ChevronSlot></SmallButton>
          </SmallColumn>
          <GroupLabel>页眉和页脚</GroupLabel>
        </Group>

        <Group $last>
          <GroupBody>
            <BigButton $width={46}><IconBox><TextFrameIcon /></IconBox>文本框<ChevronSlot><Chevron /></ChevronSlot></BigButton>
            <SmallColumn>
              <SmallButton><PartsIcon />文档部件</SmallButton>
              <SmallButton><WordArtIcon />艺术字</SmallButton>
              <SmallButton $disabled><DropCapIcon />首字下沉</SmallButton>
            </SmallColumn>
          </GroupBody>
        </Group>
      </Ribbon>

      <RulerStrip>
        <RulerActive>
          {ticks.map((n) => <Tick key={n}>{n}</Tick>)}
          <IndentMarker width="12" height="11" viewBox="0 0 12 11">
            <path d="M1.500 10.500V5.500L6 1L10.500 5.500V10.500Z" fill="#fff" stroke="#777" />
          </IndentMarker>
        </RulerActive>
        <RulerRest>
          <Tick $first>40</Tick>
          <Tick>42</Tick>
          <Tick>44</Tick>
        </RulerRest>
      </RulerStrip>

      <Page>
        <MarginCorner />
        <Paragraph>
          大兔子把小兔子放到了用叶子铺成的床上，她低下<Grammar>头来亲了</Grammar>亲小兔子，对她<br />
          一声晚安，然后她躺在小兔子的身边，微笑着轻轻地说：“我爱你，一直到<br />
          那里，再从月亮上回到这里来。”<ReturnMark>↵</ReturnMark>
        </Paragraph>
        <Drawing>
          <Handle $at="top" />
          <Handle $at="right" />
          <Handle $at="bottom" />
          <Corner />
          <Corner bottom />
          <BaiduMark />
        </Drawing>
      </Page>

      <StatusBar>
        <StatusItem $gap={18}>
          个字
          <svg width="14" height="14" viewBox="0 0 14 14" fill="none" stroke="#444">
            <path d="M1.500 12.500V1.500H12.500V12.500Z" />
          </svg>
        </StatusItem>
        <StatusItem>
          <svg width="14" height="14" viewBox="0 0 14 14" fill="none" stroke="#444">
            <path d="M0.500 3V0.500H3M11 0.500H13.500V3M3.500 13V3.500H8L10.500 6V13M7.500 3.500V6.500H10.500" />
          </svg>
          专注
        </StatusItem>
      </StatusBar>
    </Window>
  );
}
